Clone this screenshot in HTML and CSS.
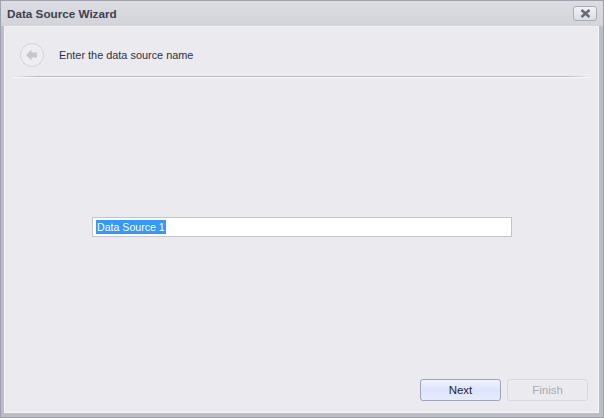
FILE: index.html
```html
<!DOCTYPE html>
<html>
<head>
<meta charset="utf-8">
<link rel="stylesheet" href="styles.css">
</head>
<body>
<div class="window">
  <div class="titlebar">
    <span class="title">Data Source Wizard</span>
    <button class="close" aria-label="Close">
      <svg width="11" height="9" viewBox="0 0 11 9"><path d="M1.5 1 L9.5 8 M9.5 1 L1.5 8" stroke="#666977" stroke-width="2.4" stroke-linecap="butt"/></svg>
    </button>
  </div>
  <div class="content">
    <div class="header">
      <div class="back">
        <svg width="24" height="24" viewBox="0 0 24 24">
          <circle cx="12" cy="12" r="11.5" fill="#eeeef2" stroke="#d3d4da"/>
          <path d="M6 12 L11.5 6.5 L11.5 9.5 L17 9.5 L17 14.5 L11.5 14.5 L11.5 17.5 Z" fill="#c6c7ce"/>
        </svg>
      </div>
      <span class="heading">Enter the data source name</span>
    </div>
    <div class="separator"></div>
    <div class="main">
      <div class="field"><span class="sel">Data Source 1</span></div>
    </div>
    <div class="footer">
      <button class="btn primary">Next</button>
      <button class="btn disabled">Finish</button>
    </div>
  </div>
</div>
</body>
</html>
```
FILE: styles.css
```css
html, body {
  margin: 0;
  padding: 0;
  width: 604px;
  height: 418px;
  overflow: hidden;
  font-family: "Liberation Sans", Arial, sans-serif;
}
.window {
  box-sizing: border-box;
  width: 604px;
  height: 418px;
  background: #bbbcc6;
  border: 1px solid #9fa1ad;
  display: flex;
  flex-direction: column;
  padding: 0 4px 4px 3px;
}
.titlebar {
  height: 25px;
  flex: none;
  display: flex;
  align-items: center;
  justify-content: space-between;
  background: linear-gradient(#dcdde2, #d3d4da);
  margin: 0 -4px 0 -3px;
  padding: 0 6px 0 6px;
}
.title {
  font-weight: bold;
  font-size: 11.7px;
  color: #3e4150;
  margin-top: 0;
}
.close {
  width: 24px;
  height: 15px;
  margin-top: 0;
  padding: 0;
  border: 1px solid #a9abb6;
  border-radius: 3px;
  background: linear-gradient(#f2f2f5, #dcdde3);
  display: flex;
  align-items: center;
  justify-content: center;
}
.content {
  flex: 1;
  display: flex;
  flex-direction: column;
  background: #ebebef;
  border: 1px solid #f6f6f8;
  border-top-color: #f0f0f3;
}
.header {
  height: 49px;
  display: flex;
  align-items: center;
  padding-left: 15px;
  flex: none;
}
.back {
  width: 24px;
  height: 24px;
  margin-right: 15px;
  margin-top: 6px;
}
.heading {
  font-size: 10.9px;
  color: #2d2f48;
  margin-top: 7px;
}
.separator {
  height: 1px;
  margin: 0 8px 0 8px;
  background: linear-gradient(to right, #ebebef, #b9bac4 4%, #b9bac4 96%, #ebebef);
  border-bottom: 1px solid #f7f7f9;
  flex: none;
}
.main {
  flex: 1;
  display: flex;
  align-items: center;
  padding-left: 87px;
  padding-bottom: 3px;
}
.field {
  box-sizing: border-box;
  width: 420px;
  height: 20px;
  background: #ffffff;
  border: 1px solid #c2c3cb;
  display: flex;
  align-items: center;
  padding-left: 3px;
}
.sel {
  background: #3399ff;
  color: #ffffff;
  font-size: 10.6px;
  line-height: 14px;
  padding: 0 1px;
}
.footer {
  display: flex;
  justify-content: flex-end;
  gap: 6px;
  padding: 0 10px 11px 0;
  flex: none;
}
.btn {
  box-sizing: border-box;
  width: 81px;
  height: 22px;
  border-radius: 3px;
  font-family: "Liberation Sans", Arial, sans-serif;
  font-size: 11.5px;
  padding: 0;
}
.primary {
  border: 1px solid #9ea3b8;
  background: linear-gradient(#f0f3ff, #dde4fb 50%, #e7ecfc);
  color: #1f2235;
}
.disabled {
  border: 1px solid #d8d9df;
  background: #ebebef;
  color: #a8a9b2;
}
```
